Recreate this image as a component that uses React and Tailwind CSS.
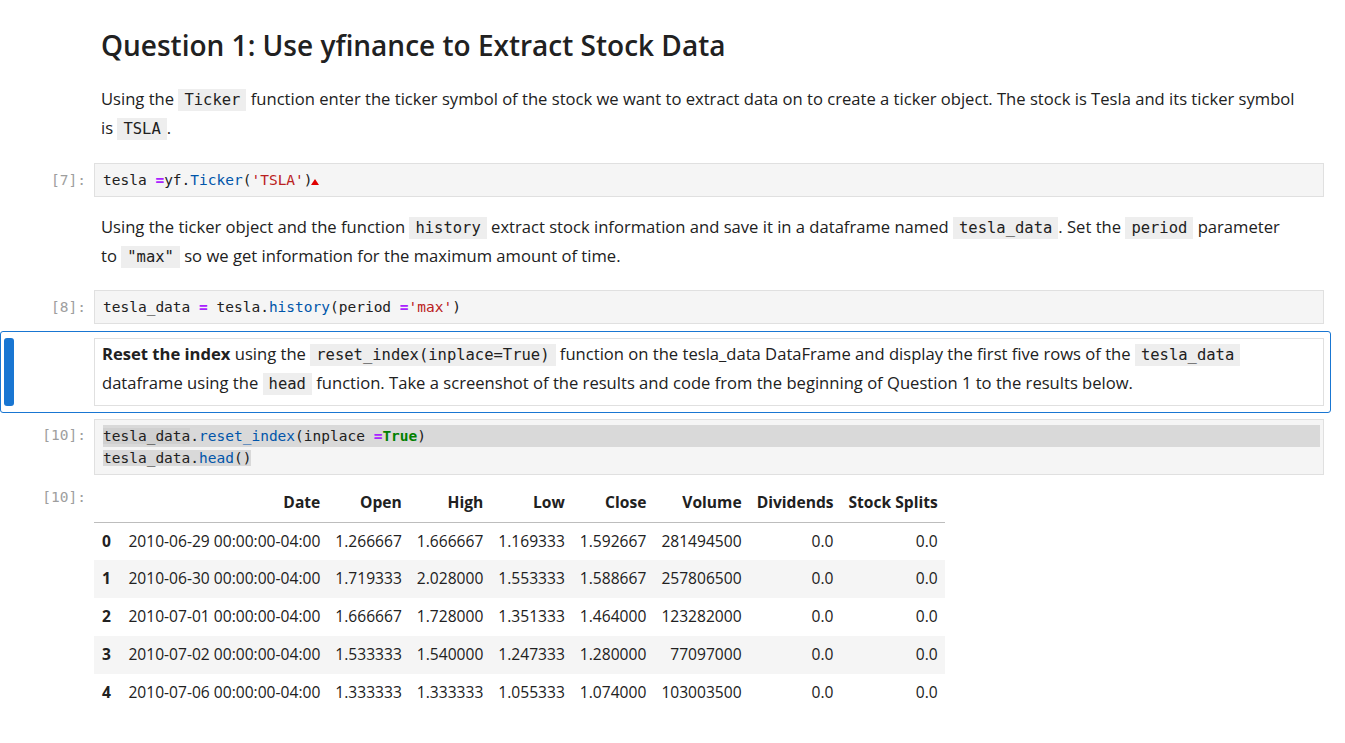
import React from "react";

const mono = { fontFamily: '"DejaVu Sans Mono", "Liberation Mono", monospace' };

const Code = ({ children }) => (
    <code className="bg-[#eeeeee] px-[6px] py-[2px] text-[15.5px] text-[#212121]" style={mono}>{children}</code>
);

const Prompt = ({ n }) => (
    <div className="w-[94px] shrink-0 pr-[8px] text-right text-[14.5px] text-[#9e9e9e]" style={mono}>[{n}]:</div>
);

const Op = ({ children }) => <span className="font-bold text-[#aa22ff]">{children}</span>;
const Prop = ({ children }) => <span className="text-[#0055aa]">{children}</span>;
const Str = ({ children }) => <span className="text-[#ba2121]">{children}</span>;

const CodeCell = ({ n, children }) => (
    <div className="flex items-start">
        <div className="pt-[7px]"><Prompt n={n} /></div>
        <div className="mr-[21px] flex-1 border border-[#e0e0e0] bg-[#f5f5f5] px-[8px] py-[6px] text-[14.5px] leading-[20px] text-[#212121]" style={mono}>
            {children}
        </div>
    </div>
);

const rows = [
    ["0", "2010-06-29 00:00:00-04:00", "1.266667", "1.666667", "1.169333", "1.592667", "281494500", "0.0", "0.0"],
    ["1", "2010-06-30 00:00:00-04:00", "1.719333", "2.028000", "1.553333", "1.588667", "257806500", "0.0", "0.0"],
    ["2", "2010-07-01 00:00:00-04:00", "1.666667", "1.728000", "1.351333", "1.464000", "123282000", "0.0", "0.0"],
    ["3", "2010-07-02 00:00:00-04:00", "1.533333", "1.540000", "1.247333", "1.280000", "77097000", "0.0", "0.0"],
    ["4", "2010-07-06 00:00:00-04:00", "1.333333", "1.333333", "1.055333", "1.074000", "103003500", "0.0", "0.0"],
];
const heads = ["Date", "Open", "High", "Low", "Close", "Volume", "Dividends", "Stock Splits"];

export default function App() {
    return (
        <div className="min-h-screen bg-white text-[#212121]" style={{ fontFamily: '"Open Sans", "Noto Sans", sans-serif' }}>
            <div className="pt-[26px]">
                {/* heading + first paragraph */}
                <div className="pl-[101px] pr-[47px]">
                    <h2 className="text-[28px] font-semibold leading-[38px] text-[#212121]">Question 1: Use yfinance to Extract Stock Data</h2>
                    <p className="mt-[21px] text-[16.6px] leading-[28px]">
                        Using the <Code>Ticker</Code> function enter the ticker symbol of the stock we want to extract data on to create a ticker object. The stock is Tesla and its ticker symbol is <Code>TSLA</Code>.
                    </p>
                </div>

                <div className="mt-[20px]">
                    <CodeCell n={7}>
                        tesla <Op>=</Op>yf.<Prop>Ticker</Prop>(<Str>'TSLA'</Str>)
                        <span className="relative inline-block w-0">
                            <span className="absolute left-[-2px] top-[-6px] h-0 w-0 border-x-[4px] border-b-[6px] border-x-transparent border-b-[#e00000]" />
                        </span>
                    </CodeCell>
                </div>

                <div className="mt-[16px] pl-[101px] pr-[47px]">
                    <p className="text-[16.6px] leading-[28px]">
                        Using the ticker object and the function <Code>history</Code> extract stock information and save it in a dataframe named <Code>tesla_data</Code>. Set the <Code>period</Code> parameter to <Code>"max"</Code> so we get information for the maximum amount of time.
                    </p>
                </div>

                <div className="mt-[19px]">
                    <CodeCell n={8}>
                        tesla_data <Op>=</Op> tesla.<Prop>history</Prop>(period <Op>=</Op><Str>'max'</Str>)
                    </CodeCell>
                </div>

                {/* selected markdown cell */}
                <div className="relative mr-[14px] mt-[7px] flex rounded-[3px] border border-[#1976d2] py-[6px]">
                    <div className="w-[93px] shrink-0 pl-[3px]">
                        <div className="h-full w-[10px] rounded-[3px] bg-[#1976d2]" />
                    </div>
                    <div className="mr-[6px] flex-1 border border-[#e0e0e0] px-[7px] pb-[7px] pt-[1px] text-[16.6px] leading-[28px]">
                        <b>Reset the index</b> using the <Code>reset_index(inplace=True)</Code> function on the tesla_data DataFrame and display the first five rows of the <Code>tesla_data</Code> dataframe using the <Code>head</Code> function. Take a screenshot of the results and code from the beginning of Question 1 to the results below.
                    </div>
                </div>

                <div className="mt-[6px]">
                    <div className="flex items-start">
                        <div className="pt-[6px]"><Prompt n={10} /></div>
                        <div className="mr-[21px] flex-1 border border-[#e0e0e0] bg-[#f5f5f5] py-[5px] pl-[8px] pr-[3px] text-[14.5px] leading-[22px]" style={mono}>
                            <div className="bg-[#d9d9d9]"><span className="bg-[#d0d0d0]">tesla_data</span>.<Prop>reset_index</Prop>(inplace <Op>=</Op><span className="font-bold text-[#008000]">True</span>)</div>
                            <div><span className="bg-[#d9d9d9]">tesla_data.<Prop>head</Prop>()</span></div>
                        </div>
                    </div>
                </div>

                {/* output */}
                <div className="mt-[8px] flex items-start">
                    <div className="pt-[4px]"><Prompt n={10} /></div>
                    <table className="border-collapse text-[15.6px]">
                        <thead>
                            <tr className="border-b border-[#bdbdbd]">
                                <th className="h-[39px] px-[4px]" />
                                {heads.map((h) => (
                                    <th key={h} className="h-[39px] px-[7.5px] text-right font-bold">{h}</th>
                                ))}
                            </tr>
                        </thead>
                        <tbody>
                            {rows.map((r, i) => (
                                <tr key={r[0]} className={i % 2 === 1 ? "bg-[#f5f5f5]" : ""}>
                                    <th className="h-[38px] pl-[8px] pr-[10px] text-left font-bold">{r[0]}</th>
                                    {r.slice(1).map((c, j) => (
                                        <td key={j} className="h-[38px] px-[7.5px] text-right">{c}</td>
                                    ))}
                                </tr>
                            ))}
                        </tbody>
                    </table>
                </div>
            </div>
        </div>
    );
}
